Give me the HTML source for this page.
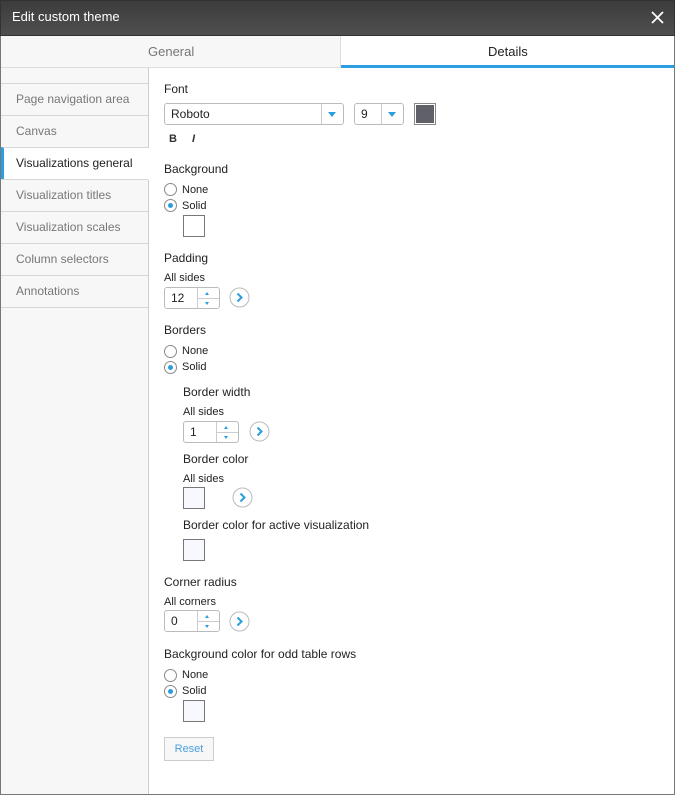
<!DOCTYPE html>
<html><head><meta charset="utf-8"><style>
*{box-sizing:border-box;margin:0;padding:0}
body{width:675px;height:795px;position:relative;background:#fff;font-family:"Liberation Sans",Arial,sans-serif;overflow:hidden;color:#222}
.a{position:absolute}
.t{position:absolute;font-size:12px;line-height:14px;white-space:nowrap;color:#222}
.s{font-size:11px}
.hd{left:0;top:0;width:675px;height:36px;background:linear-gradient(#3c3c3c,#4f4f4f);border:1px solid #333}
.frame{left:0;top:36px;width:675px;height:759px;border:1px solid #777;border-top:none}
.side{left:1px;top:68px;width:148px;height:726px;background:#f7f7f7;border-right:1px solid #ccc}
.item{position:absolute;left:1px;width:147px;height:33px;border-top:1px solid #d6d6d6;font-size:12px;color:#777;padding-left:15px;line-height:31px}
.radio{position:absolute;width:13px;height:13px;border:1px solid #8a8a8a;border-radius:50%;background:#fff}
.radio.on::after{content:"";position:absolute;left:3px;top:3px;width:5px;height:5px;border-radius:50%;background:#2a9ee0}
.sw{position:absolute;width:22px;height:22px;border:1px solid #777;background:#f8f9ff}
.spin{position:absolute;width:56px;height:22px;border:1px solid #bbb;border-radius:3px;background:#fff;font-size:12px;line-height:20px;padding-left:6px}
.spin::before{content:"";position:absolute;left:32px;top:0;width:1px;height:20px;background:#ccc}
.spin::after{content:"";position:absolute;left:33px;top:10px;width:21px;height:1px;background:#ccc}
.spin i{position:absolute;left:40px;width:0;height:0;border-left:2.5px solid transparent;border-right:2.5px solid transparent}
.up{top:4px;border-bottom:3px solid #2a9ee0}
.dn{top:14px;border-top:3px solid #2a9ee0}
.go{position:absolute;width:21px;height:21px}
.dd{position:absolute;height:22px;border:1px solid #bbb;border-radius:3px;background:#fff;font-size:12px;line-height:20px;padding-left:6px}
.dd b{position:absolute;right:0;top:0;width:22px;height:20px;border-left:1px solid #ccc}
.dd b::after{content:"";position:absolute;left:6px;top:8px;border-left:4px solid transparent;border-right:4px solid transparent;border-top:5px solid #2a9ee0}
</style></head><body>
<div class="a hd"></div>
<div class="t" style="left:12px;top:10px;font-size:13px;color:#fff">Edit custom theme</div>
<svg class="a" style="left:651px;top:11px" width="13" height="13"><path d="M1 1L12 12M12 1L1 12" stroke="#fff" stroke-width="1.8"/></svg>
<div class="a frame"></div>
<div class="a" style="left:1px;top:36px;width:340px;height:32px;background:#f7f7f7;border-bottom:1px solid #ddd;border-right:1px solid #ddd"></div>
<div class="t" style="left:148px;top:45px;font-size:13px;color:#777">General</div>
<div class="a" style="left:341px;top:65px;width:333px;height:3px;background:#2a9ee0"></div>
<div class="t" style="left:488px;top:45px;font-size:13px;color:#222">Details</div>
<div class="a side"></div>
<div class="item" style="top:83px">Page navigation area</div>
<div class="item" style="top:115px">Canvas</div>
<div class="item" style="top:147px;background:#fff;color:#222;border-left:3px solid #2a9ee0;padding-left:12px;width:148px">Visualizations general</div>
<div class="item" style="top:179px">Visualization titles</div>
<div class="item" style="top:211px">Visualization scales</div>
<div class="item" style="top:243px">Column selectors</div>
<div class="item" style="top:275px;border-bottom:1px solid #d6d6d6">Annotations</div>

<div class="t" style="left:164px;top:82px">Font</div>
<div class="dd" style="left:164px;top:103px;width:180px">Roboto<b></b></div>
<div class="dd" style="left:354px;top:103px;width:50px">9<b></b></div>
<div class="a" style="left:414px;top:103px;width:22px;height:22px;border:1px solid #888;padding:1px;background:#fff"><div style="width:18px;height:18px;background:#5f6068"></div></div>
<div class="t s" style="left:169px;top:132px;font-weight:bold;color:#333">B</div>
<div class="t s" style="left:192px;top:132px;font-style:italic;font-weight:bold;color:#333">I</div>

<div class="t" style="left:164px;top:162px">Background</div>
<div class="radio" style="left:164px;top:183px"></div><div class="t s" style="left:182px;top:183px">None</div>
<div class="radio on" style="left:164px;top:199px"></div><div class="t s" style="left:182px;top:199px">Solid</div>
<div class="sw" style="left:183px;top:215px;background:#fff"></div>

<div class="t" style="left:164px;top:251px">Padding</div>
<div class="t s" style="left:164px;top:271px">All sides</div>
<div class="spin" style="left:164px;top:287px">12<i class="up"></i><i class="dn"></i></div>
<svg class="go" style="left:229px;top:287px" viewBox="0 0 21 21"><circle cx="10.5" cy="10.5" r="9.5" fill="#fff" stroke="#bbb"/><path d="M8.5 6.5L12.5 10.5L8.5 14.5" fill="none" stroke="#2a9ee0" stroke-width="2"/></svg>

<div class="t" style="left:164px;top:323px">Borders</div>
<div class="radio" style="left:164px;top:345px"></div><div class="t s" style="left:182px;top:344px">None</div>
<div class="radio on" style="left:164px;top:361px"></div><div class="t s" style="left:182px;top:360px">Solid</div>
<div class="t" style="left:183px;top:385px">Border width</div>
<div class="t s" style="left:183px;top:405px">All sides</div>
<div class="spin" style="left:183px;top:421px">1<i class="up"></i><i class="dn"></i></div>
<svg class="go" style="left:249px;top:421px" viewBox="0 0 21 21"><circle cx="10.5" cy="10.5" r="9.5" fill="#fff" stroke="#bbb"/><path d="M8.5 6.5L12.5 10.5L8.5 14.5" fill="none" stroke="#2a9ee0" stroke-width="2"/></svg>
<div class="t" style="left:183px;top:452px">Border color</div>
<div class="t s" style="left:183px;top:472px">All sides</div>
<div class="sw" style="left:183px;top:487px"></div>
<svg class="go" style="left:232px;top:487px" viewBox="0 0 21 21"><circle cx="10.5" cy="10.5" r="9.5" fill="#fff" stroke="#bbb"/><path d="M8.5 6.5L12.5 10.5L8.5 14.5" fill="none" stroke="#2a9ee0" stroke-width="2"/></svg>
<div class="t" style="left:183px;top:518px">Border color for active visualization</div>
<div class="sw" style="left:183px;top:539px"></div>

<div class="t" style="left:164px;top:575px">Corner radius</div>
<div class="t s" style="left:164px;top:595px">All corners</div>
<div class="spin" style="left:164px;top:610px">0<i class="up"></i><i class="dn"></i></div>
<svg class="go" style="left:229px;top:611px" viewBox="0 0 21 21"><circle cx="10.5" cy="10.5" r="9.5" fill="#fff" stroke="#bbb"/><path d="M8.5 6.5L12.5 10.5L8.5 14.5" fill="none" stroke="#2a9ee0" stroke-width="2"/></svg>

<div class="t" style="left:164px;top:647px">Background color for odd table rows</div>
<div class="radio" style="left:164px;top:669px"></div><div class="t s" style="left:182px;top:668px">None</div>
<div class="radio on" style="left:164px;top:685px"></div><div class="t s" style="left:182px;top:684px">Solid</div>
<div class="sw" style="left:183px;top:700px"></div>
<div class="a" style="left:164px;top:737px;width:50px;height:24px;border:1px solid #ccc;background:#f7f7f7;font-size:11px;line-height:22px;text-align:center;color:#4a9fe0">Reset</div>
</body></html>
